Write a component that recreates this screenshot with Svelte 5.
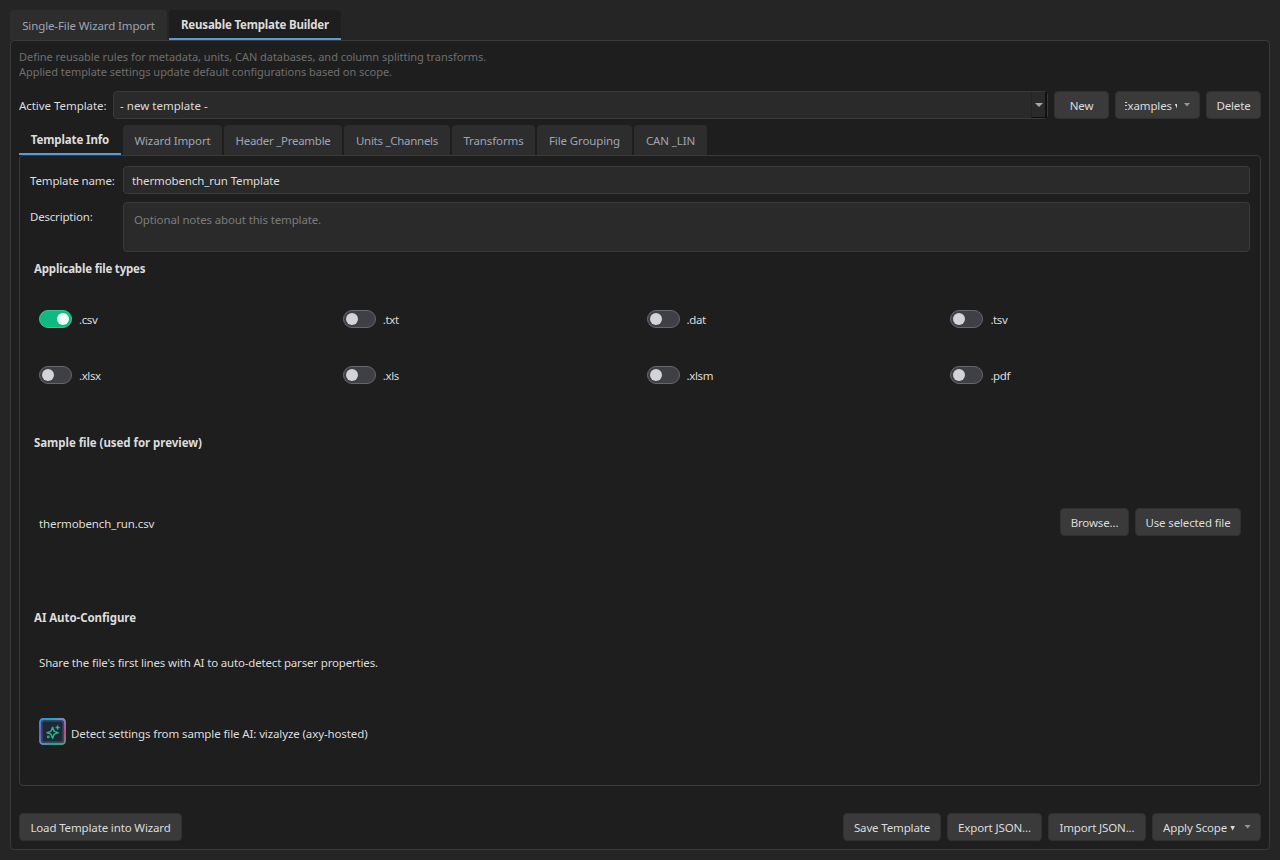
<script>
  const tabs = [
    { label: 'Template Info', width: 102, active: true },
    { label: 'Wizard Import', width: 99 },
    { label: 'Header _Preamble', width: 118, tight: true },
    { label: 'Units _Channels', width: 106, tight: true },
    { label: 'Transforms', width: 83 },
    { label: 'File Grouping', width: 95 },
    { label: 'CAN _LIN', width: 73 }
  ];
  let types = $state([
    { ext: '.csv', on: true },
    { ext: '.txt', on: false },
    { ext: '.dat', on: false },
    { ext: '.tsv', on: false },
    { ext: '.xlsx', on: false },
    { ext: '.xls', on: false },
    { ext: '.xlsm', on: false },
    { ext: '.pdf', on: false }
  ]);
</script>

<div class="window">
  <nav class="outer-tabs">
    <div class="tab first">Single-File Wizard Import</div>
    <div class="tab second active">Reusable Template Builder</div>
  </nav>

  <main class="page">
    <p class="hint">Define reusable rules for metadata, units, CAN databases, and column splitting transforms.<br />Applied template settings update default configurations based on scope.</p>

    <div class="template-row">
      <span class="label">Active Template:</span>
      <div class="select">
        <span>- new template -</span>
        <div class="drop"><svg width="8" height="4" viewBox="0 0 8 4"><path d="M0 0h8L4 4z" fill="#a8a8a8" /></svg></div>
      </div>
      <button class="new">New</button>
      <button class="examples"><span class="clip"><span>Examples <i class="mini"></i></span></span><i class="arrow"></i></button>
      <button class="delete">Delete</button>
    </div>

    <nav class="inner-tabs">
      {#each tabs as tab}
        <div class="tab" class:active={tab.active} class:tight={tab.tight} style:width="{tab.width}px">{tab.label}</div>
      {/each}
    </nav>

    <section class="panel">
      <div class="field">
        <span class="label">Template name:</span>
        <div class="input">thermobench_run Template</div>
      </div>
      <div class="field notes">
        <span class="label">Description:</span>
        <div class="area">Optional notes about this template.</div>
      </div>

      <h2 class="types-title">Applicable file types</h2>
      <div class="types">
        {#each types as type}
          <div class="type">
            <button class="toggle" class:on={type.on} aria-label={type.ext} onclick={() => (type.on = !type.on)}><i></i></button>
            <span>{type.ext}</span>
          </div>
        {/each}
      </div>

      <h2 class="sample-title">Sample file (used for preview)</h2>
      <div class="sample">
        <span>thermobench_run.csv</span>
        <button class="browse">Browse...</button>
        <button class="use">Use selected file</button>
      </div>

      <h2 class="ai-title">AI Auto-Configure</h2>
      <p class="share">Share the file's first lines with AI to auto-detect parser properties.</p>
      <div class="detect">
        <svg width="28" height="28" viewBox="0 0 28 28" fill="none">
          <defs>
            <linearGradient id="left" x1="0" y1="0" x2="0" y2="1"><stop stop-color="#2c9fe8" /><stop offset=".55" stop-color="#8058ea" /><stop offset="1" stop-color="#4a9fc8" /></linearGradient>
            <linearGradient id="right" x1="0" y1="0" x2="0" y2="1"><stop stop-color="#8a84d0" /><stop offset=".5" stop-color="#d34b94" /><stop offset="1" stop-color="#579b83" /></linearGradient>
            <linearGradient id="top" x1="0" x2="1"><stop stop-color="#2f8eed" /><stop offset=".45" stop-color="#0caed2" /><stop offset="1" stop-color="#8a84d0" /></linearGradient>
            <linearGradient id="bottom" x1="0" x2="1"><stop stop-color="#5d86d8" /><stop offset=".6" stop-color="#13ad7d" /><stop offset="1" stop-color="#689680" /></linearGradient>
          </defs>
          <rect x=".5" y=".5" width="26" height="26" rx="4.500" fill="#343e4c" />
          <rect x="3" y="3" width="21" height="21" rx="2.500" fill="#1e2838" stroke="#465060" />
          <g stroke-width="1.800">
            <path d="M4.500 1Q1 1 1 4.500v18q0 3.500 3.500 3.500" stroke="url(#left)" />
            <path d="M22.500 1q3.500 0 3.500 3.500v18q0 3.500-3.500 3.500" stroke="url(#right)" />
            <path d="M2.200 2q.9-1 2.300-1h18q1.400 0 2.300 1" stroke="url(#top)" />
            <path d="M2.200 25q.9 1 2.300 1h18q1.400 0 2.300-1" stroke="url(#bottom)" />
          </g>
          <path d="M13.600 9.200l1.300 3.400q.3.700 1 1l3.200 1.100-3.200 1.200q-.7.300-1 1l-1.300 3.300-1.300-3.300q-.3-.7-1-1l-3.200-1.200 3.200-1.100q.7-.3 1-1z" stroke="#24b889" stroke-width="1.500" stroke-linejoin="round" />
          <path d="M18.600 8v3M17.100 9.500h3" stroke="#24b889" stroke-width="1.400" stroke-linecap="round" />
          <circle cx="9.300" cy="18.900" r=".9" stroke="#24b889" stroke-width="1.100" />
        </svg>
        <span>Detect settings from sample file AI: vizalyze (axy-hosted)</span>
      </div>
    </section>

    <footer>
      <button class="load">Load Template into Wizard</button>
      <button class="save">Save Template</button>
      <button class="export">Export JSON...</button>
      <button class="import">Import JSON...</button>
      <button class="scope">Apply Scope <i class="mini"></i><i class="arrow"></i></button>
    </footer>
  </main>
</div>

<style>
  * { box-sizing: border-box; }
  :global(body) { margin: 0; background: #252525; }
  .window {
    width: 1280px; height: 860px; padding: 10px;
    background: #252525; color: #dcdcdc;
    font: 11.5px/16px "Noto Sans", sans-serif;
    letter-spacing: -0.12px; white-space: nowrap; overflow: hidden;
    display: flex; flex-direction: column;
  }
  h2, p { margin: 0; }
  h2 { font-size: 11.5px; line-height: 16px; font-weight: 700; padding-left: 14px; }
  nav { display: flex; gap: 2px; height: 30px; flex: none; }
  .tab {
    height: 30px; padding-top: 2px; border-radius: 4px 4px 0 0;
    background: #2d2d2d; color: #9da5b4;
    display: flex; align-items: center; justify-content: center;
  }
  .tab.active {
    background: #1e1e1e; color: #dcdcdc; font-weight: 700;
    border-bottom: 2px solid #569cd6;
  }
  .tab.first { width: 157px; }
  .tab.second { width: 172px; letter-spacing: -0.19px; }
  .tab.tight { letter-spacing: -0.28px; }
  .page {
    flex: 1; border: 1px solid #3a3a3a; border-radius: 4px; background: #1e1e1e;
    padding: 8px; display: flex; flex-direction: column; min-height: 0;
  }
  .hint { color: #6e6e6e; font-size: 11px; line-height: 15px; letter-spacing: -0.035px; height: 42px; }
  .template-row { display: flex; height: 28px; align-items: center; margin-bottom: 6px; }
  .template-row .label { width: 94px; padding-top: 2px; letter-spacing: -0.05px; }
  .select {
    width: 935px; height: 28px; margin-right: 6px; padding-left: 6px;
    border: 1px solid #3a3a3a; border-radius: 4px; background: #2a2a2a;
    display: flex; align-items: center; letter-spacing: 0.03px;
  }
  .select span { padding-top: 2px; }
  .drop {
    margin-left: auto; width: 16px; height: 26px;
    border-right: 2px solid #111; border-bottom: 1px solid #111; border-left: 1px solid #242424;
    display: flex; align-items: center; justify-content: center;
  }
  button {
    height: 28px; padding: 2px 0 0; border: 1px solid #303030; border-radius: 4px; background: #3a3a3a;
    color: #dcdcdc; font: inherit; letter-spacing: -0.14px;
    display: flex; align-items: center; justify-content: center; flex: none;
  }
  .new { width: 55px; margin-right: 6px; }
  .examples { width: 85px; margin-right: 6px; }
  .delete { width: 55px; }
  .clip { width: 52px; overflow: hidden; display: flex; justify-content: center; }
  .clip > span { flex: none; }
  .mini { display: inline-block; width: 5px; height: 5px; background: currentColor; clip-path: polygon(0 0, 100% 0, 50% 100%); vertical-align: 1px; }
  .arrow { width: 7px; height: 4px; margin-left: 7px; margin-top: -3px; background: #969696; clip-path: polygon(0 0, 100% 0, 50% 100%); }
  .panel {
    height: 631px; border: 1px solid #3a3a3a; border-radius: 4px; padding: 10px 10px 10px 0;
    display: flex; flex-direction: column;
  }
  .field { display: flex; height: 28px; align-items: center; padding-left: 10px; margin-bottom: 8px; flex: none; }
  .field .label { width: 93px; margin-top: 2px; letter-spacing: -0.15px; }
  .input, .area { flex: 1; border: 1px solid #3a3a3a; border-radius: 4px; background: #2a2a2a; }
  .input { height: 28px; padding: 6px 8px; }
  .area { height: 50px; padding: 9px 10px; color: #7b7b7b; letter-spacing: -0.14px; }
  .field.notes { height: 50px; align-items: flex-start; }
  .field.notes .label { margin-top: 7px; letter-spacing: -0.2px; }
  .types-title { margin-top: 1px; letter-spacing: -0.19px; }
  .types { display: grid; grid-template-columns: repeat(4, 303.8px); grid-auto-rows: 56px; margin: 14px 0 32px 19px; }
  .type { display: flex; align-items: center; gap: 7px; letter-spacing: -0.4px; }
  .type span { margin-top: 2px; }
  .toggle { width: 33px; height: 18px; border: 1px solid #66666d; border-radius: 9px; background: #3f3f46; justify-content: flex-start; padding: 0 0 0 2px; }
  .toggle i { width: 12px; height: 12px; border-radius: 50%; background: #d4d4d8; }
  .toggle.on { background: #10b981; border-color: #34c895; justify-content: flex-end; padding: 0 2px 0 0; }
  .toggle.on i { background: #ecfdf5; }
  .sample-title { letter-spacing: -0.05px; }
  .sample { display: flex; align-items: center; height: 28px; margin: 57px 9px 74px 19px; }
  .sample span { margin: 4px auto 0 0; }
  .browse { width: 69px; margin-right: 6px; }
  .use { width: 106px; }
  .ai-title { letter-spacing: -0.07px; }
  .share { margin: 29px 0 0 19px; letter-spacing: -0.17px; }
  .detect { display: flex; align-items: center; gap: 4px; height: 28px; margin: 47px 0 0 19px; letter-spacing: -0.11px; }
  .detect span { margin-top: 4px; }
  footer { display: flex; gap: 6px; margin-top: auto; }
  .load { width: 163px; margin-right: auto; }
  .save { width: 98px; }
  .export { width: 95px; }
  .import { width: 98px; }
  .scope { width: 109px; justify-content: flex-start; padding-left: 10px; }
  .scope .mini { margin-left: 3px; }
  .scope .arrow { margin-left: 9px; }
</style>
